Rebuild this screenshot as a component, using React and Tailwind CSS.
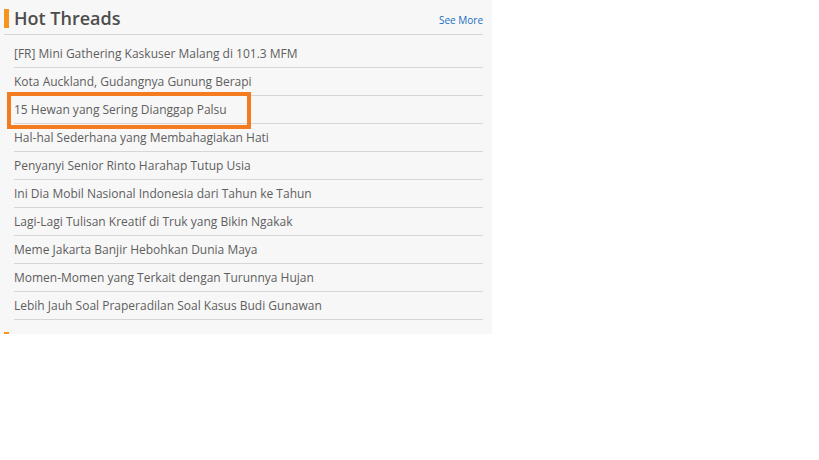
import React from 'react';

const threads = [
  '[FR] Mini Gathering Kaskuser Malang di 101.3 MFM',
  'Kota Auckland, Gudangnya Gunung Berapi',
  '15 Hewan yang Sering Dianggap Palsu',
  'Hal-hal Sederhana yang Membahagiakan Hati',
  'Penyanyi Senior Rinto Harahap Tutup Usia',
  'Ini Dia Mobil Nasional Indonesia dari Tahun ke Tahun',
  'Lagi-Lagi Tulisan Kreatif di Truk yang Bikin Ngakak',
  'Meme Jakarta Banjir Hebohkan Dunia Maya',
  'Momen-Momen yang Terkait dengan Turunnya Hujan',
  'Lebih Jauh Soal Praperadilan Soal Kasus Budi Gunawan',
];

export default function App() {
  return (
    <div className="w-[819px] h-[460px] bg-white" style={{ fontFamily: '"Open Sans", sans-serif' }}>
      <div className="relative w-[492px] h-[334px] bg-[#f7f7f7] pl-[4px] pr-[9px] pt-[9px]">
        {/* Header */}
        <div className="flex items-end justify-between border-b border-[#d6d6d6] pb-[6px]">
          <div className="flex items-center">
            <span className="w-[5px] h-[19px] bg-[#f7941d]" />
            <h2 className="ml-[5px] text-[18px] leading-[19px] font-semibold text-[#4d4d4d]">
              Hot Threads
            </h2>
          </div>
          <a href="#" className="text-[10px] leading-[14px] text-[#1a6fc4] mb-[1px]">
            See More
          </a>
        </div>

        {/* List */}
        <ul className="ml-[10px] mt-[5px]">
          {threads.map((t, i) => (
            <li
              key={i}
              className="relative h-[28px] flex items-center border-b border-[#d6d6d6] text-[12px] text-[#5e5e5e]"
            >
              {t}
              {i === 2 && (
                <span className="absolute left-[-7px] top-[-4px] w-[244px] h-[37px] border-[4px] border-[#f47b20]" />
              )}
            </li>
          ))}
        </ul>

        <span className="absolute left-[4px] bottom-0 w-[5px] h-[2px] bg-[#f7941d]" />
      </div>
    </div>
  );
}
